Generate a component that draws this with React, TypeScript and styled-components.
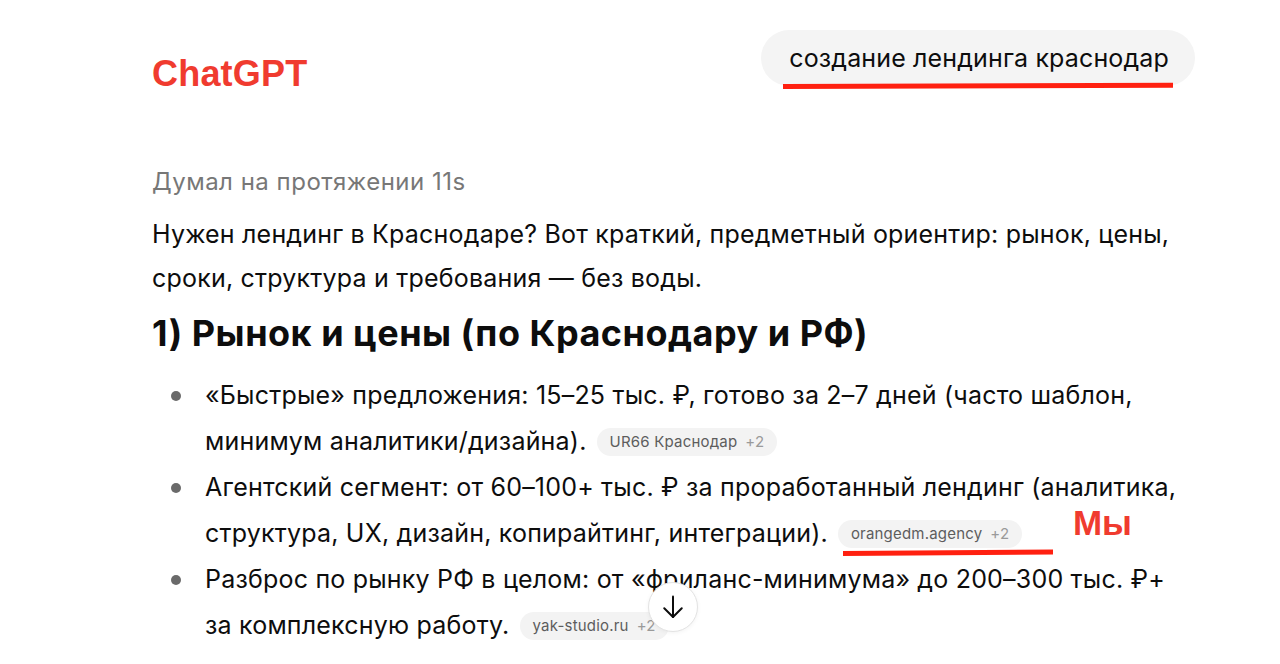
import React from "react";
import styled, { createGlobalStyle } from "styled-components";

const Global = createGlobalStyle`
  html, body { margin: 0; padding: 0; background: #fff; }
  body { font-family: Inter, "Noto Sans", sans-serif; color: #0d0d0d; overflow: hidden; }
`;

const Page = styled.div`
  position: relative;
  width: 1280px;
  height: 664px;
  overflow: hidden;
  box-sizing: border-box;
  padding: 30px 85px 0 152px;
`;

const Header = styled.div`
  display: flex;
  justify-content: space-between;
  align-items: flex-start;
`;

const Brand = styled.div`
  margin-top: 23px;
  font-family: "Liberation Sans", Arial, sans-serif;
  font-weight: 700;
  font-size: 36px;
  color: #f03b2f;
  letter-spacing: 0.2px;
`;

const QueryWrap = styled.div`
  position: relative;
`;

const QueryPill = styled.div`
  background: #f4f4f4;
  border-radius: 28px;
  height: 56px;
  padding: 0 26px 0 28px;
  display: flex;
  align-items: center;
  font-size: 25px;
  letter-spacing: 0.15px;
  color: #0d0d0d;
`;

const Underline = styled.div<{ $w: number; $l: number; $t: number; $rot?: number }>`
  position: absolute;
  left: ${(p) => p.$l}px;
  top: ${(p) => p.$t}px;
  width: ${(p) => p.$w}px;
  height: 5px;
  background: #ff2010;
  transform: rotate(${(p) => p.$rot ?? 0}deg);
  transform-origin: left center;
`;

const Thought = styled.div`
  margin-top: 72px;
  font-size: 24px;
  letter-spacing: 0.5px;
  color: #777;
`;

const Para = styled.p`
  margin: 16px 0 0;
  font-size: 25px;
  letter-spacing: 0.2px;
  line-height: 44px;
`;

const Heading = styled.h2`
  margin: 5px 0 0;
  font-size: 36px;
  letter-spacing: 0.5px;
  font-weight: 700;
  line-height: 56px;
`;

const List = styled.ul`
  margin: 11px 0 0;
  padding: 0 0 0 53px;
  list-style: none;
`;

const Item = styled.li`
  position: relative;
  font-size: 25px;
  letter-spacing: 0.2px;
  line-height: 46px;
  &::before {
    content: "";
    position: absolute;
    left: -34px;
    top: 19px;
    width: 10px;
    height: 10px;
    border-radius: 50%;
    background: #6a6a6a;
  }
`;

const Chip = styled.span`
  display: inline-flex;
  align-items: center;
  gap: 8px;
  height: 28px;
  padding: 0 13px;
  margin-left: 10px;
  border-radius: 14px;
  background: #f3f3f3;
  font-size: 15px;
  letter-spacing: 0.2px;
  color: #5d5d5d;
  vertical-align: 3px;
  line-height: 1;
  position: relative;
`;

const ChipMore = styled.span`
  color: #9a9a9a;
`;

const Note = styled.span`
  position: absolute;
  left: 235px;
  top: -15px;
  font-family: "Liberation Sans", Arial, sans-serif;
  font-weight: 700;
  font-size: 35px;
  letter-spacing: 0;
  color: #f03b2f;
  white-space: nowrap;
  line-height: 1;
`;

const ScrollBtn = styled.button`
  position: absolute;
  left: 648px;
  top: 582px;
  width: 50px;
  height: 50px;
  border-radius: 50%;
  border: 1px solid #e3e3e3;
  background: #fff;
  box-shadow: 0 1px 4px rgba(0, 0, 0, 0.05);
  display: flex;
  align-items: center;
  justify-content: center;
  padding: 0;
`;

export default function App() {
  return (
    <>
      <Global />
      <Page>
        <Header>
          <Brand>ChatGPT</Brand>
          <QueryWrap>
            <QueryPill>создание лендинга краснодар</QueryPill>
            <Underline $l={22} $t={54} $w={390} $rot={-0.2} />
          </QueryWrap>
        </Header>
        <Thought>Думал на протяжении 11s</Thought>
        <Para>
          Нужен лендинг в Краснодаре? Вот краткий, предметный ориентир: рынок, цены,
          <br />
          сроки, структура и требования — без воды.
        </Para>
        <Heading>1) Рынок и цены (по Краснодару и РФ)</Heading>
        <List>
          <Item>
            «Быстрые» предложения: 15–25 тыс. ₽, готово за 2–7 дней (часто шаблон,
            <br />
            минимум аналитики/дизайна).
            <Chip>
              UR66 Краснодар <ChipMore>+2</ChipMore>
            </Chip>
          </Item>
          <Item>
            Агентский сегмент: от 60–100+ тыс. ₽ за проработанный лендинг (аналитика,
            <br />
            структура, UX, дизайн, копирайтинг, интеграции).
            <Chip>
              orangedm.agency <ChipMore>+2</ChipMore>
              <Underline $l={5} $t={31} $w={210} $rot={-0.4} />
              <Note>Мы</Note>
            </Chip>
          </Item>
          <Item>
            Разброс по рынку РФ в целом: от «фриланс-минимума» до 200–300 тыс. ₽+
            <br />
            за комплексную работу.
            <Chip>
              yak-studio.ru <ChipMore>+2</ChipMore>
            </Chip>
          </Item>
        </List>
        <ScrollBtn aria-label="scroll down">
          <svg width="30" height="30" viewBox="0 0 24 24" fill="none" stroke="#0d0d0d" strokeWidth="1.6" strokeLinecap="round" strokeLinejoin="round">
            <path d="M12 3.5v16.5" />
            <path d="M5 13l7 7 7-7" />
          </svg>
        </ScrollBtn>
      </Page>
    </>
  );
}
